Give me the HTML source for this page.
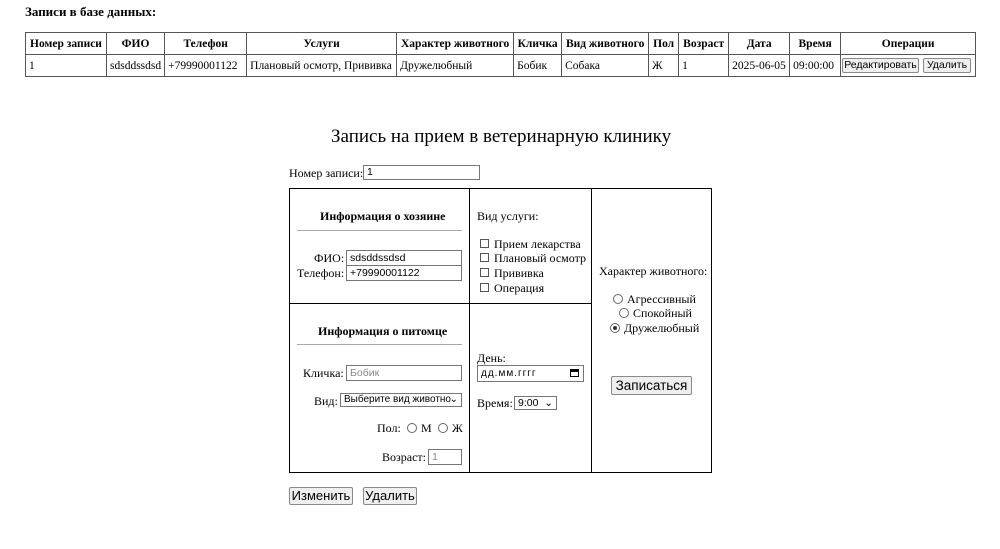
<!DOCTYPE html>
<html><head><meta charset="utf-8"><style>
body{margin:0;width:1000px;height:549px;background:#fff;font-family:"Liberation Serif","DejaVu Serif",serif;font-size:12px;color:#000;position:relative;overflow:hidden}
.a{position:absolute;white-space:nowrap}
table.t{position:absolute;left:25px;top:32px;border-collapse:collapse;font-size:11.5px}
table.t td,table.t th{border:1px solid #555;padding:0 3px;height:21px}
table.t th{font-weight:bold;text-align:center}
.btn{position:absolute;background:#efefef;border:1px solid #8a8a8a;font-family:"Liberation Sans",sans-serif;font-size:12px;text-align:center;box-sizing:border-box;border-radius:2px}
.inp{position:absolute;border:1px solid #767676;box-sizing:border-box;font-family:"Liberation Sans",sans-serif;font-size:10.5px;padding-left:3px;line-height:14px;background:#fff}
.cb{position:absolute;width:9px;height:9px;border:1px solid #555;box-sizing:border-box}
.rd{position:absolute;width:10px;height:10px;border:1px solid #666;border-radius:50%;box-sizing:border-box}
.ln{position:absolute;background:#000}
</style></head><body>
<div class="a" style="left:25px;top:4px;font-weight:bold;font-size:13px">Записи в базе данных:</div>
<table class="t">
<tr><th style="width:74px">Номер записи</th><th style="width:50px">ФИО</th><th style="width:75px">Телефон</th><th style="width:143px">Услуги</th><th style="width:110px">Характер животного</th><th style="width:41px">Кличка</th><th style="width:80px">Вид животного</th><th style="width:23px">Пол</th><th style="width:43px">Возраст</th><th style="width:54px">Дата</th><th style="width:44px">Время</th><th style="width:128px">Операции</th></tr>
<tr><td>1</td><td>sdsddssdsd</td><td>+79990001122</td><td>Плановый осмотр, Прививка</td><td>Дружелюбный</td><td>Бобик</td><td>Собака</td><td>Ж</td><td>1</td><td>2025-06-05</td><td>09:00:00</td><td></td></tr>
</table>
<div class="btn" style="left:842px;top:58px;width:77px;height:15px;font-size:10.5px;line-height:13px">Редактировать</div>
<div class="btn" style="left:923px;top:58px;width:48px;height:15px;font-size:10.5px;line-height:13px">Удалить</div>

<div class="a" style="left:331px;top:126px;font-size:19px">Запись на прием в ветеринарную клинику</div>
<div class="a" style="left:289px;top:166px">Номер записи:</div>
<div class="inp" style="left:363px;top:165px;width:117px;height:15px;line-height:13px">1</div>

<div style="position:absolute;left:289px;top:188px;width:423px;height:285px;border:1px solid #000;box-sizing:border-box"></div>
<div class="ln" style="left:469px;top:188px;width:1px;height:285px"></div>
<div class="ln" style="left:591px;top:188px;width:1px;height:285px"></div>
<div class="ln" style="left:289px;top:303px;width:302px;height:1px"></div>

<div class="a" style="left:320px;top:209px;font-weight:bold">Информация о хозяине</div>
<div style="position:absolute;left:297px;top:230px;width:165px;height:1px;background:#aaa"></div>
<div class="a" style="left:314px;top:251px">ФИО:</div>
<div class="a" style="left:297px;top:266px">Телефон:</div>
<div class="inp" style="left:346px;top:250px;width:116px;height:16px">sdsddssdsd</div>
<div class="inp" style="left:346px;top:265px;width:116px;height:16px">+79990001122</div>

<div class="a" style="left:477px;top:209px">Вид услуги:</div>
<div class="cb" style="left:480px;top:239px"></div><div class="a" style="left:494px;top:237px">Прием лекарства</div>
<div class="cb" style="left:480px;top:253px"></div><div class="a" style="left:494px;top:251px">Плановый осмотр</div>
<div class="cb" style="left:480px;top:268px"></div><div class="a" style="left:494px;top:266px">Прививка</div>
<div class="cb" style="left:480px;top:283px"></div><div class="a" style="left:494px;top:281px">Операция</div>

<div class="a" style="left:599px;top:264px">Характер животного:</div>
<div class="rd" style="left:613px;top:294px"></div><div class="a" style="left:627px;top:292px">Агрессивный</div>
<div class="rd" style="left:619px;top:308px"></div><div class="a" style="left:633px;top:306px">Спокойный</div>
<div class="rd" style="left:610px;top:323px"></div><div style="position:absolute;left:613px;top:326px;width:4px;height:4px;border-radius:50%;background:#333"></div><div class="a" style="left:624px;top:321px">Дружелюбный</div>
<div class="btn" style="left:611px;top:376px;width:81px;height:19px;font-size:13.5px;line-height:17px">Записаться</div>

<div class="a" style="left:318px;top:324px;font-weight:bold">Информация о питомце</div>
<div style="position:absolute;left:297px;top:344px;width:165px;height:1px;background:#aaa"></div>
<div class="a" style="left:303px;top:366px">Кличка:</div>
<div class="inp" style="left:346px;top:365px;width:116px;height:16px;color:#888">Бобик</div>
<div class="a" style="left:314px;top:394px">Вид:</div>
<div class="inp" style="left:340px;top:393px;width:122px;height:14px;font-size:10px;line-height:12px">Выберите вид животно<span style="position:absolute;right:3px;top:0">⌄</span></div>
<div class="a" style="left:377px;top:421px">Пол:</div>
<div class="rd" style="left:407px;top:423px"></div><div class="a" style="left:421px;top:421px">М</div>
<div class="rd" style="left:438px;top:423px"></div><div class="a" style="left:452px;top:421px">Ж</div>
<div class="a" style="left:382px;top:450px">Возраст:</div>
<div class="inp" style="left:428px;top:449px;width:34px;height:16px;color:#888">1</div>

<div class="a" style="left:477px;top:351px">День:</div>
<div class="inp" style="left:477px;top:365px;width:107px;height:17px;font-size:10px;line-height:15px;letter-spacing:1px">дд.мм.гггг<span style="position:absolute;right:4px;top:3px;width:9px;height:8px;border:1px solid #000;border-top-width:3px;box-sizing:border-box"></span></div>
<div class="a" style="left:477px;top:396px">Время:</div>
<div class="inp" style="left:514px;top:396px;width:43px;height:14px;font-size:10.5px;line-height:12px">9:00<span style="position:absolute;right:3px;top:0">⌄</span></div>

<div class="btn" style="left:289px;top:487px;width:64px;height:18px;font-size:13px;line-height:16px">Изменить</div>
<div class="btn" style="left:363px;top:487px;width:54px;height:18px;font-size:13px;line-height:16px">Удалить</div>
</body></html>
